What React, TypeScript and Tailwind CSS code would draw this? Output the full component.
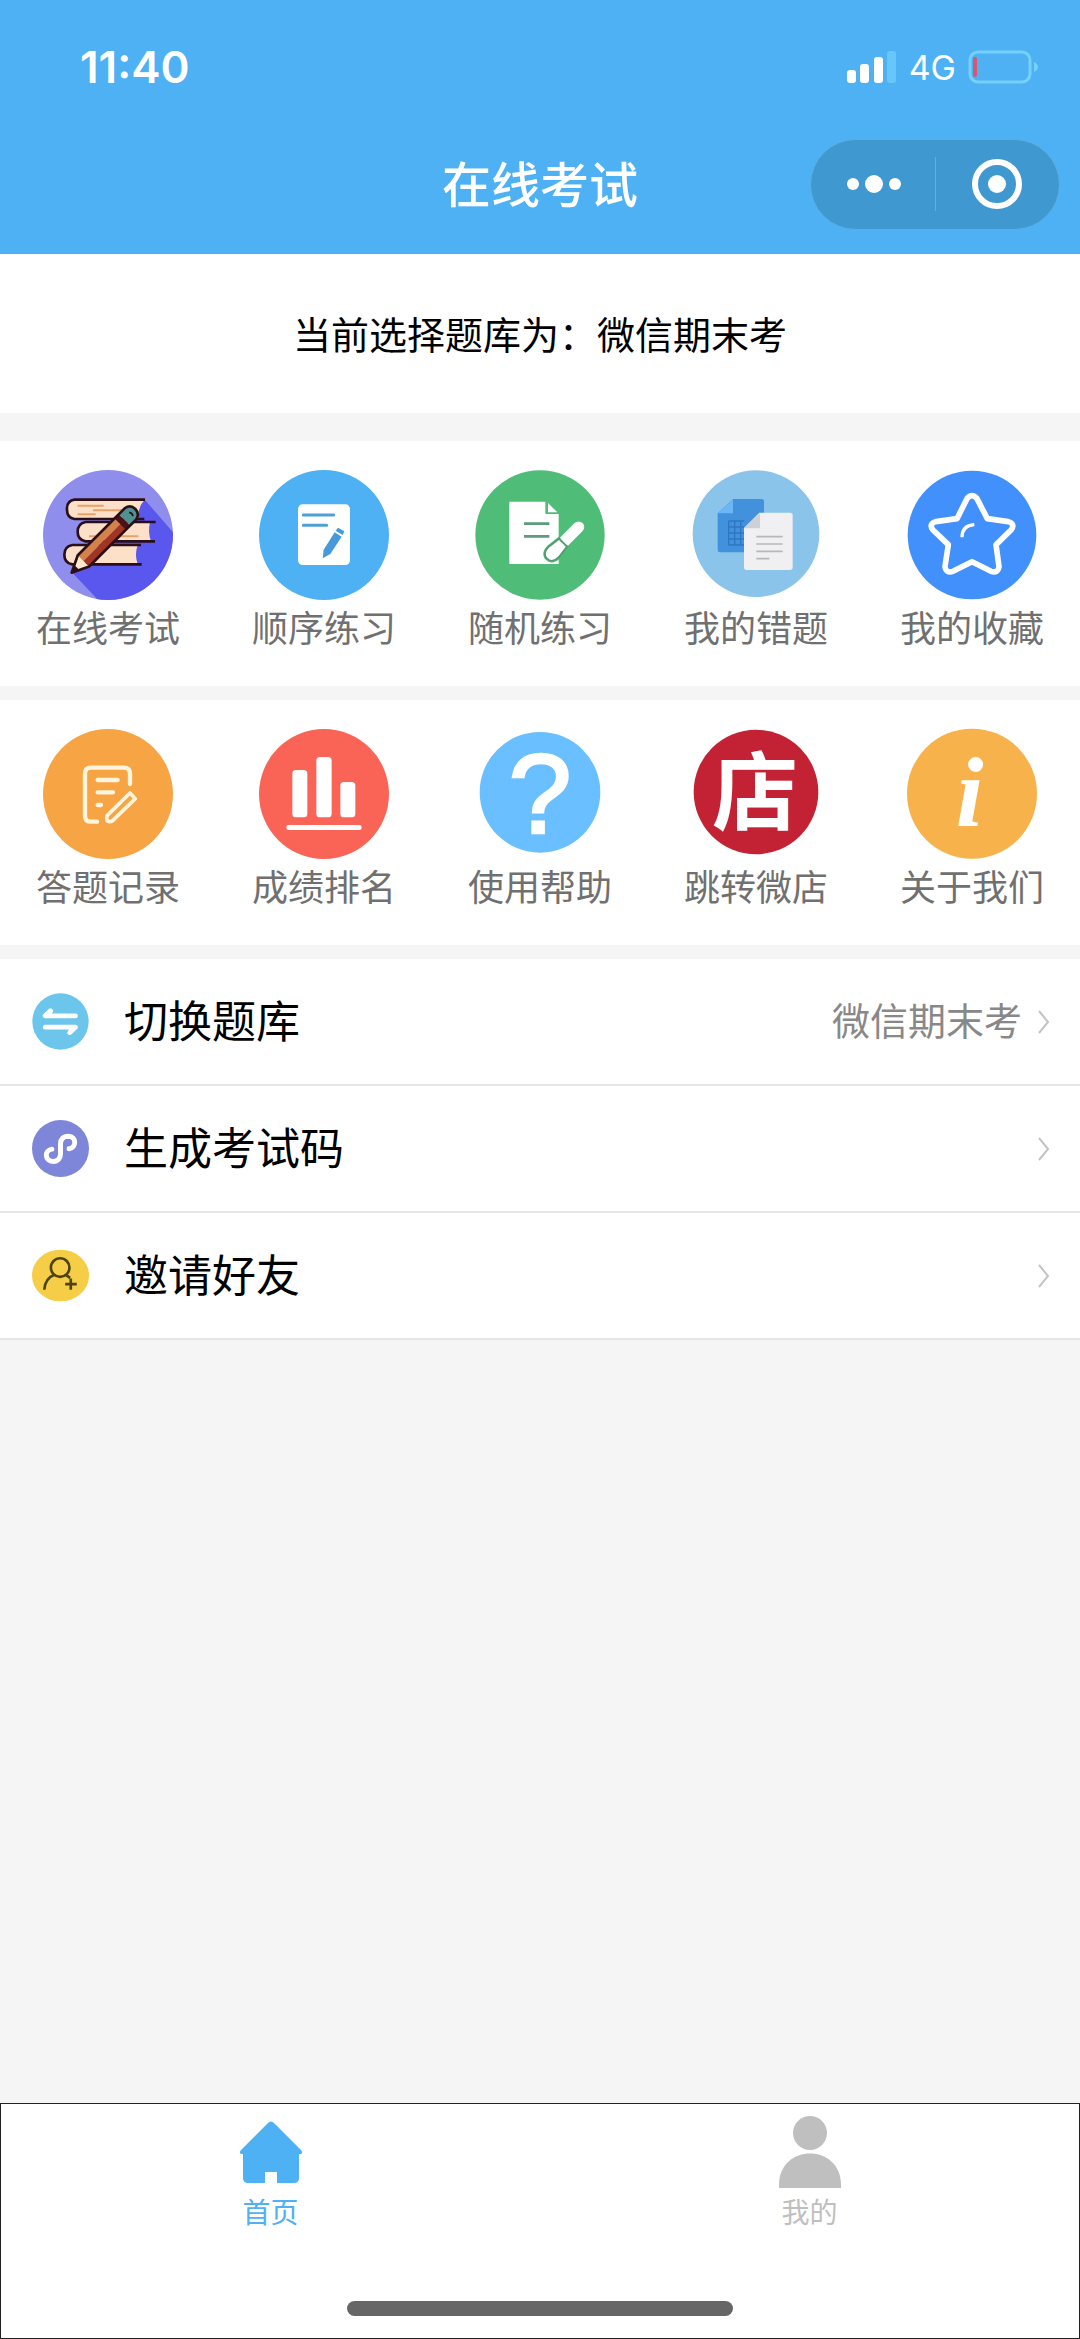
// src/App.tsx
import type { ReactNode } from 'react';

interface MenuItem {
  label: string;
  icon: ReactNode;
}

interface ListItem extends MenuItem {
  value?: string;
}

function BooksIcon() {
  return (
    <>
      <clipPath id="books-clip">
        <circle cx="195" cy="195" r="195" />
      </clipPath>
      <circle cx="195" cy="195" r="195" fill="#8f8eec" />
      <path d="M306 90L400 198V400H175L88 308Z" fill="#5a57ee" clipPath="url(#books-clip)" />
      <g fill="#fce0c8">
        <path d="M304 89H94Q70 93 72 119Q72 143 94 147H288Q282 116 304 89Z" />
        <path d="M321 156H128Q104 160 104 186Q104 210 128 214H324Q314 186 321 156Z" />
        <path d="M284 225H88Q64 229 64 254Q64 279 88 283H284Q274 254 284 225Z" />
      </g>
      <g fill="none" stroke="#2b0f18" strokeWidth="8">
        <path d="M306 89H94Q70 93 72 119Q72 143 94 147H304" />
        <path d="M338 156H128Q104 160 104 186Q104 210 128 214H336" />
        <path d="M294 225H88Q64 229 64 254Q64 279 88 283H296" />
      </g>
      <path d="M104 107H182M150 121H240M104 133H158M138 199H176M230 199H286" stroke="#e8a268" strokeWidth="6" />
      <g transform="translate(86 308) rotate(-45)" strokeLinejoin="round">
        <path d="M0 0L50 -24V24Z" fill="#fce8cc" />
        <path d="M0 0L22 -11V11Z" fill="#2b0f18" />
        <path d="M50 -24H212V0H50Z" fill="#d4824a" />
        <path d="M50 0H212V24H50Z" fill="#9e3527" />
        <path d="M206 -24H224V24H206Z" fill="#4a1218" />
        <path d="M224 -24H250Q268 -20 268 0Q268 20 250 24H224Z" fill="#4f9290" />
        <path d="M0 0L50 -24H250Q270 -20 270 0Q270 20 250 24H50Z" fill="none" stroke="#2b0f18" strokeWidth="8" />
        <path d="M250 -6Q256 2 250 10" fill="none" stroke="#2b0f18" strokeWidth="5" />
      </g>
    </>
  );
}

function OrderIcon() {
  return (
    <>
      <circle cx="195" cy="195" r="195" fill="#4db1f3" />
      <rect x="117" y="103" width="156" height="182" rx="14" fill="#fff" />
      <path d="M133 135H224M133 166H203" stroke="#4d9fd8" strokeWidth="9" strokeLinecap="round" />
      <path d="M191 265L194 239L227 187L248 200L214 252Z" fill="#469ad9" />
      <path d="M230 182L237 173L256 184L251 195Z" fill="#469ad9" />
    </>
  );
}

function RandomIcon() {
  return (
    <>
      <circle cx="195" cy="195" r="194" fill="#4fbd78" />
      <path d="M103 95H211V132H251V282H103Z" fill="#fff" />
      <path d="M219 99L247 127H219Z" fill="#fff" />
      <path d="M147 161H223M147 199H223" stroke="#5c9c7a" strokeWidth="8" />
      <g transform="translate(216 266) rotate(-45)">
        <path d="M0 0C0 -16 14 -22 28 -22L66 -17H134A17 17 0 0 1 134 17H66L28 22C14 22 0 16 0 0Z" fill="#fff" stroke="#4fbd78" strokeWidth="10" />
        <path d="M0 0C0 -16 14 -22 28 -22L68 -17V17L28 22C14 22 0 16 0 0Z" fill="#fff" stroke="#559c72" strokeWidth="6" />
        <path d="M72 -17H134A17 17 0 0 1 134 17H72Z" fill="#fff" />
      </g>
    </>
  );
}

function MistakesIcon() {
  return (
    <>
      <circle cx="195" cy="191" r="190" fill="#8bc4ea" />
      <path d="M126 87H212Q219 87 219 94V247H87Q80 247 80 240V130Z" fill="#4191dc" />
      <path d="M81 130L126 87V130Z" fill="#6bb7f5" />
      <path d="M113 153H160M113 171H160M113 189H160M113 207H160M113 225H160M113 153V225M131 153V225M149 153V225" stroke="#2f76c2" strokeWidth="4" />
      <path d="M205 128H297Q305 128 305 136V292Q305 300 297 300H167Q159 300 159 292V174Z" fill="#f0eff2" />
      <path d="M159 175L207 129V175Z" fill="#cdd0d7" />
      <path d="M196 200H275M196 222H275M196 244H275M196 266H235" stroke="#b5b7bd" strokeWidth="5" />
    </>
  );
}

function StarIcon() {
  return (
    <>
      <circle cx="195" cy="195" r="193" fill="#4190fb" />
      <path
        d="M180 86Q195 68 210 86L241 146L304 155Q326 162 312 180L267 224L276 290Q273 311 252 304L195 275L138 304Q117 311 114 290L124 224L78 180Q64 162 86 155L150 146Z"
        fill="none"
        stroke="#fff"
        strokeWidth="17"
        strokeLinejoin="round"
      />
      <path d="M165 202Q165 166 202 164" fill="none" stroke="#fff" strokeWidth="10" />
    </>
  );
}

function RecordIcon() {
  return (
    <>
      <circle cx="195" cy="195" r="195" fill="#f7a444" />
      <g fill="none" stroke="#fff4dc" strokeWidth="13" strokeLinecap="round">
        <path d="M261 165V134Q261 116 243 116H144Q126 116 126 134V260Q126 278 144 278H162" />
        <path d="M164 153H224M164 190H210M164 228H174" />
        <path d="M261 192L277 209L209 275Q201 280 193 276Q189 267 193 259Z" strokeWidth="11" strokeLinejoin="round" />
      </g>
    </>
  );
}

function RankIcon() {
  return (
    <>
      <circle cx="195" cy="195" r="195" fill="#fa6456" />
      <g fill="#fff">
        <rect x="100" y="123" width="45" height="142" rx="11" />
        <rect x="172" y="84" width="46" height="181" rx="11" />
        <rect x="244" y="159" width="45" height="106" rx="11" />
        <rect x="82" y="288" width="226" height="15" rx="7" />
      </g>
    </>
  );
}

function HelpIcon() {
  return (
    <>
      <circle cx="195" cy="190" r="181" fill="#69bfff" />
      <text
        x="195"
        y="313"
        textAnchor="middle"
        fill="#fff"
        stroke="#fff"
        strokeWidth="8"
        className="font-['Liberation_Sans',sans-serif] text-[340px]"
      >
        ?
      </text>
    </>
  );
}

function ShopIcon() {
  return (
    <>
      <circle cx="195" cy="189" r="187" fill="#c32235" />
      <text x="192" y="286" textAnchor="middle" fill="#fff" className="text-[258px] font-bold">
        店
      </text>
    </>
  );
}

function AboutIcon() {
  return (
    <>
      <circle cx="195" cy="194" r="195" fill="#f8b24c" />
      <text x="188" y="290" textAnchor="middle" fill="#fff" className="font-['Liberation_Serif',serif] text-[300px] font-bold italic">
        i
      </text>
    </>
  );
}

function SwitchIcon() {
  return (
    <>
      <circle cx="86" cy="86" r="85" fill="#6cc6ec" />
      <g fill="none" stroke="#fff" strokeWidth="15" strokeLinecap="round" strokeLinejoin="round">
        <path d="M56 54L40 69H131" />
        <path d="M40 103H131L114 119" />
      </g>
    </>
  );
}

function CodeIcon() {
  return (
    <>
      <circle cx="86" cy="86" r="86" fill="#7d86d8" />
      <path
        d="M112 87C134 84 136 50 110 49C94 49 86 58 86 72V102C86 116 78 125 64 125C38 124 36 92 60 88"
        fill="none"
        stroke="#fff"
        strokeWidth="15"
        strokeLinecap="round"
      />
    </>
  );
}

function InviteIcon() {
  return (
    <>
      <ellipse cx="86" cy="86" rx="86" ry="78" fill="#f5cd46" />
      <g fill="none" stroke="#4c4414" strokeWidth="8">
        <circle cx="85" cy="62" r="28" />
        <path d="M37 129Q40 94 68 84M102 84L115 93M117 95V129M100 112H135" />
      </g>
    </>
  );
}

const examMenu: MenuItem[] = [
  { label: '在线考试', icon: <BooksIcon /> },
  { label: '顺序练习', icon: <OrderIcon /> },
  { label: '随机练习', icon: <RandomIcon /> },
  { label: '我的错题', icon: <MistakesIcon /> },
  { label: '我的收藏', icon: <StarIcon /> },
];

const toolMenu: MenuItem[] = [
  { label: '答题记录', icon: <RecordIcon /> },
  { label: '成绩排名', icon: <RankIcon /> },
  { label: '使用帮助', icon: <HelpIcon /> },
  { label: '跳转微店', icon: <ShopIcon /> },
  { label: '关于我们', icon: <AboutIcon /> },
];

const listItems: ListItem[] = [
  { label: '切换题库', icon: <SwitchIcon />, value: '微信期末考' },
  { label: '生成考试码', icon: <CodeIcon /> },
  { label: '邀请好友', icon: <InviteIcon /> },
];

function StatusBar() {
  return (
    <div className="flex h-[134px] items-center justify-between pr-[42px] pl-20 font-[Inter,sans-serif]">
      <span className="text-[44px] font-semibold">11:40</span>
      <div className="flex items-center gap-3">
        <svg viewBox="0 0 50 32" className="h-8 w-[50px]" fill="#fff">
          <rect x="0" y="19" width="9" height="13" rx="3" />
          <rect x="13" y="13" width="9" height="19" rx="3" />
          <rect x="27" y="6" width="9" height="26" rx="3" />
          <rect x="40" y="0" width="9" height="32" rx="3" fill="#67c7fb" />
        </svg>
        <span className="text-[34px]">4G</span>
        <svg viewBox="0 0 70 34" className="h-[34px] w-[70px]">
          <rect x="2" y="2" width="60" height="30" rx="8" fill="none" stroke="#76d0fc" strokeWidth="3" />
          <rect x="5" y="7" width="4" height="20" rx="2" fill="#d9566e" />
          <path d="M66 12Q70 14 70 17Q70 20 66 22Z" fill="#76d0fc" />
        </svg>
      </div>
    </div>
  );
}

function NavBar() {
  return (
    <div className="grid h-[100px] grid-cols-[250px_1fr_250px] items-center px-5">
      <h1 className="col-start-2 pb-1 text-center text-[49px] font-medium">在线考试</h1>
      <div className="flex h-[91px] items-center rounded-full border border-[#58b0e8] bg-[#4098d0]">
        <button className="flex flex-1 justify-center" aria-label="更多">
          <svg viewBox="0 0 56 20" className="h-5 w-14" fill="#fff">
            <circle cx="8" cy="10" r="6" />
            <circle cx="29" cy="10" r="9" />
            <circle cx="50" cy="10" r="6" />
          </svg>
        </button>
        <span className="h-[54px] w-px bg-[#63afdf]" />
        <button className="flex flex-1 justify-center" aria-label="关闭">
          <svg viewBox="0 0 52 52" className="size-[52px]">
            <circle cx="26" cy="26" r="22" fill="none" stroke="#fff" strokeWidth="6" />
            <circle cx="26" cy="26" r="9" fill="#fff" />
          </svg>
        </button>
      </div>
    </div>
  );
}

function MenuGrid({ items }: { items: MenuItem[] }) {
  return (
    <section className="grid grid-cols-5 bg-white pt-[29px] pb-[34px]">
      {items.map((item) => (
        <button key={item.label} className="flex flex-col items-center">
          <svg viewBox="0 0 390 390" className="size-[130px] overflow-visible">
            {item.icon}
          </svg>
          <span className="text-[36px] leading-[52px] text-[#707070]">{item.label}</span>
        </button>
      ))}
    </section>
  );
}

function ListRow({ item }: { item: ListItem }) {
  return (
    <button className="flex h-[127px] w-full items-center border-b-2 border-[#e6e6e6] pr-[30px] pl-8 text-left">
      <svg viewBox="0 0 172 172" className="size-[57px]">
        {item.icon}
      </svg>
      <span className="ml-[35px] flex-1 pb-1.5 text-[44px] text-black">{item.label}</span>
      {item.value && <span className="pb-1.5 text-[38px] text-[#888]">{item.value}</span>}
      <svg viewBox="0 0 12 24" className="ml-4 h-6 w-3" fill="none" stroke="#c4c4c4" strokeWidth="2">
        <path d="M1 1L10 12L1 23" />
      </svg>
    </button>
  );
}

function TabBar() {
  return (
    <nav className="flex h-[236px] flex-col items-center justify-between border border-[#222] bg-white pb-[22px]">
      <div className="grid w-full grid-cols-2 pt-[9px]">
        <button className="flex flex-col items-center text-[#4db1f3]">
          <svg viewBox="0 0 64 80" className="h-20 w-16" fill="currentColor">
            <path d="M29 10Q32 7 35 10L62 37Q65 41 60 41V65Q60 70 55 70H38V59H26V70H9Q4 70 4 65V41Q-1 41 2 37Z" />
          </svg>
          <span className="text-[28px] leading-9">首页</span>
        </button>
        <button className="flex flex-col items-center text-[#bfbfbf]">
          <svg viewBox="0 0 64 80" className="h-20 w-16" fill="currentColor">
            <circle cx="32" cy="20" r="17" />
            <path d="M1 75V72C1 30 63 30 63 72V75Z" />
          </svg>
          <span className="text-[28px] leading-9">我的</span>
        </button>
      </div>
      <span className="h-[15px] w-[386px] rounded-full bg-[#666]" />
    </nav>
  );
}

export default function App() {
  return (
    <div className="flex min-h-screen flex-col bg-[#f5f5f5] font-['Noto_Sans_CJK_SC',sans-serif]">
      <header className="bg-[#4db1f3] pb-5 text-white">
        <StatusBar />
        <NavBar />
      </header>

      <main className="flex flex-1 flex-col">
        <p className="mb-7 bg-white pt-[50px] pb-[52px] text-center text-[38px] leading-[57px] text-black">
          当前选择题库为：微信期末考
        </p>
        <div className="flex flex-col gap-[14px]">
          <MenuGrid items={examMenu} />
          <MenuGrid items={toolMenu} />
          <section className="bg-white">
            {listItems.map((item) => (
              <ListRow key={item.label} item={item} />
            ))}
          </section>
        </div>
      </main>

      <TabBar />
    </div>
  );
}
